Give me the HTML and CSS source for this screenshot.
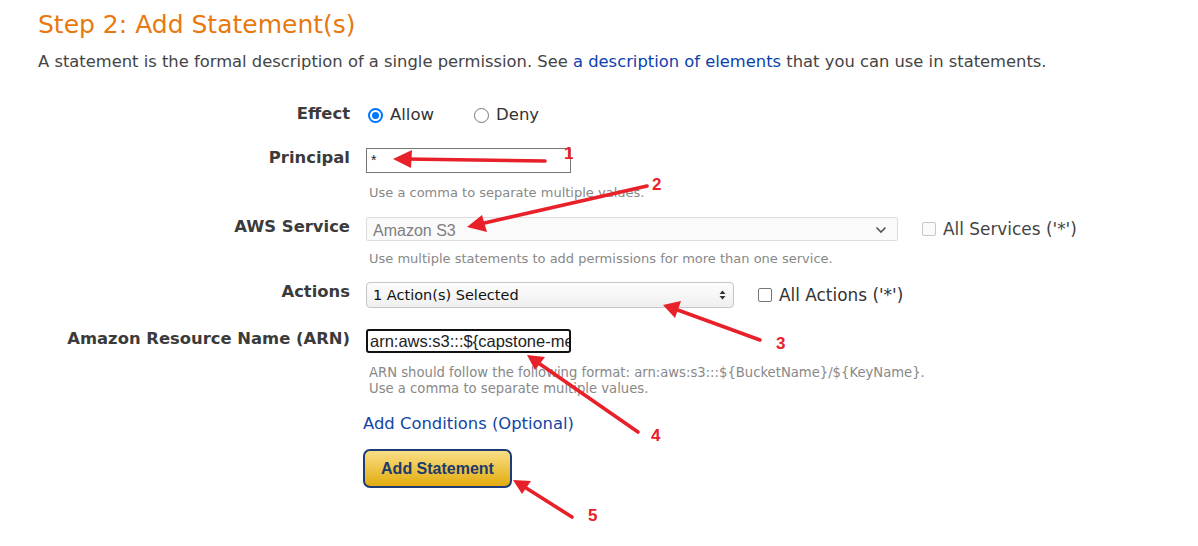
FILE: index.html
```html
<!DOCTYPE html>
<html>
<head>
<meta charset="utf-8">
<link rel="stylesheet" href="styles.css">
</head>
<body>
<div class="page">
  <h1 class="title">Step 2: Add Statement(s)</h1>
  <p class="intro">A statement is the formal description of a single permission. See <a class="link" href="#">a description of elements</a> that you can use in statements.</p>

  <div class="form">
    <div class="row row-effect">
      <div class="label">Effect</div>
      <div class="field inline">
        <label class="opt"><span class="radio checked"></span>Allow</label>
        <label class="opt opt-deny"><span class="radio"></span>Deny</label>
      </div>
    </div>

    <div class="row row-principal">
      <div class="label">Principal</div>
      <div class="field">
        <div class="textbox">*</div>
        <div class="hint hint-principal">Use a comma to separate multiple values.</div>
      </div>
    </div>

    <div class="row row-service">
      <div class="label">AWS Service</div>
      <div class="field">
        <div class="inline">
          <div class="select-disabled">
            <span>Amazon S3</span>
            <svg class="chev" width="12" height="8" viewBox="0 0 12 8"><path d="M1.5 1.5 L6 6 L10.5 1.5" fill="none" stroke="#555" stroke-width="1.6"/></svg>
          </div>
          <label class="opt opt-check disabled"><span class="check"></span>All Services ('*')</label>
        </div>
        <div class="hint hint-service">Use multiple statements to add permissions for more than one service.</div>
      </div>
    </div>

    <div class="row row-actions">
      <div class="label">Actions</div>
      <div class="field inline">
        <div class="select-actions">
          <span>1 Action(s) Selected</span>
          <svg class="updown" width="7" height="10" viewBox="0 0 7 10"><path d="M0.5 4 L3.5 0.5 L6.5 4 Z M0.5 6 L3.5 9.5 L6.5 6 Z" fill="#333"/></svg>
        </div>
        <label class="opt opt-check"><span class="check dark"></span>All Actions ('*')</label>
      </div>
    </div>

    <div class="row row-arn">
      <div class="label">Amazon Resource Name (ARN)</div>
      <div class="field">
        <div class="textbox focused">arn:aws:s3:::${capstone-me</div>
        <div class="hint hint-arn">ARN should follow the following format: arn:aws:s3:::${BucketName}/${KeyName}.<br>Use a comma to separate multiple values.</div>
      </div>
    </div>

    <div class="row row-cond">
      <div class="label"></div>
      <div class="field shift">
        <a class="link cond" href="#">Add Conditions (Optional)</a>
        <button class="btn">Add Statement</button>
      </div>
    </div>
  </div>

  <svg class="notes" width="1198" height="546" viewBox="0 0 1198 546">
    <g stroke="#e8202a" stroke-width="3.6" stroke-linecap="round" fill="none">
      <line x1="545" y1="161" x2="405" y2="159"/>
      <line x1="647" y1="186" x2="480" y2="224"/>
      <line x1="760" y1="340" x2="675" y2="309"/>
      <line x1="638" y1="432" x2="537" y2="362"/>
      <line x1="572" y1="517" x2="523" y2="486"/>
    </g>
    <g fill="#e8202a">
      <polygon points="393,159 412,150 411,168"/>
      <polygon points="467,227 482,215 487,232"/>
      <polygon points="663,305 681,301 675,318"/>
      <polygon points="527,355 545,357 535,370"/>
      <polygon points="513,480 531,481 522,494"/>
    </g>
    <g class="num" fill="#e8202a">
      <text x="564" y="159">1</text>
      <text x="652" y="190">2</text>
      <text x="776" y="349">3</text>
      <text x="651" y="441">4</text>
      <text x="588" y="521">5</text>
    </g>
  </svg>
</div>
</body>
</html>
```

FILE: styles.css
```css
* { box-sizing: border-box; }
html, body { margin: 0; padding: 0; background: #fff; }
body { font-family: "DejaVu Sans", Verdana, sans-serif; color: #444; }

.page { position: relative; width: 1198px; height: 546px; padding: 8px 0 0 38px; overflow: hidden; }

.title { margin: 0; font-weight: normal; font-size: 25px; line-height: 34px; color: #e8790f; }
.intro { margin: 10px 0 0; font-size: 16.35px; line-height: 20px; color: #444; }
.link { color: #0b3fae; text-decoration: none; }

.form { margin-top: 31px; }
.row { display: flex; align-items: flex-start; }
.label { width: 328px; flex: none; padding-right: 16px; text-align: right; font-weight: bold; font-size: 16.4px; line-height: 20px; color: #3b3b3b; white-space: nowrap; }
.field { display: flex; flex-direction: column; align-items: flex-start; }
.inline { flex-direction: row; display: flex; align-items: center; }

.row-effect .label { padding-top: 1px; }
.opt { display: flex; align-items: center; font-size: 16.5px; line-height: 24px; color: #333; white-space: nowrap; }
.opt-deny { margin-left: 38px; }
.radio { width: 15px; height: 15px; border-radius: 50%; border: 1px solid #767676; margin: 0 7px 0 2px; position: relative; background: #fff; }
.radio.checked { border: 2px solid #0075ff; }
.radio.checked::after { content: ""; position: absolute; left: 2px; top: 2px; width: 7px; height: 7px; border-radius: 50%; background: #0075ff; }

.row-principal { margin-top: 21px; }
.textbox { width: 205px; height: 25px; border: 1px solid #767676; font-family: "Liberation Sans", Arial, sans-serif; font-size: 14px; line-height: 23px; padding-left: 4px; color: #222; white-space: nowrap; overflow: hidden; }
.hint { font-size: 13px; line-height: 16px; color: #888; padding-left: 3px; white-space: nowrap; }
.hint-principal { margin-top: 12px; }
.hint-arn { font-size: 13.2px; }

.row-service { margin-top: 16px; }
.select-disabled { width: 532px; height: 24px; border: 1px solid #ddd; border-radius: 2px; background: #fafafa; display: flex; align-items: center; justify-content: space-between; padding: 0 10px 0 6px; font-family: "Liberation Sans", Arial, sans-serif; font-size: 16px; color: #808080; }
.select-disabled span { padding-top: 3px; }
.chev { margin-top: 1px; }
.opt-check { margin-left: 24px; font-size: 16.9px; }
.check { width: 14px; height: 14px; border: 1px solid #c8c8c8; border-radius: 2px; margin-right: 7px; background: #fafafa; }
.check.dark { border-color: #767676; background: #fff; }
.opt.disabled { color: #444; }
.hint-service { margin-top: 10px; }

.row-actions { margin-top: 15px; }
.select-actions { width: 368px; height: 26px; border: 1px solid #c6c6c6; border-radius: 4px; background: linear-gradient(#fdfdfd, #efefef); display: flex; align-items: center; justify-content: space-between; padding: 0 7px 0 6px; font-size: 14.5px; color: #111; }

.row-arn { margin-top: 21px; }
.textbox.focused { height: 24px; border: 2px solid #111; border-radius: 3px; font-size: 16.5px; line-height: 20px; padding-left: 2px; color: #222; }
.hint-arn { margin-top: 12px; }

.row-cond { margin-top: 17px; }
.shift { margin-left: -3px; }
.cond { font-size: 16.4px; line-height: 20px; color: #1346a3; }
.btn { margin-top: 15px; width: 149px; height: 39px; border: 2px solid #1d3c78; border-radius: 7px; background: linear-gradient(#f9df85, #e3ab0e); font-family: "Liberation Sans", Arial, sans-serif; font-weight: bold; font-size: 16px; color: #1c3a6c; padding: 0; }

.notes { position: absolute; left: 0; top: 0; pointer-events: none; }
.num text { font-family: "Liberation Sans", Arial, sans-serif; font-weight: bold; font-size: 17px; }
```
